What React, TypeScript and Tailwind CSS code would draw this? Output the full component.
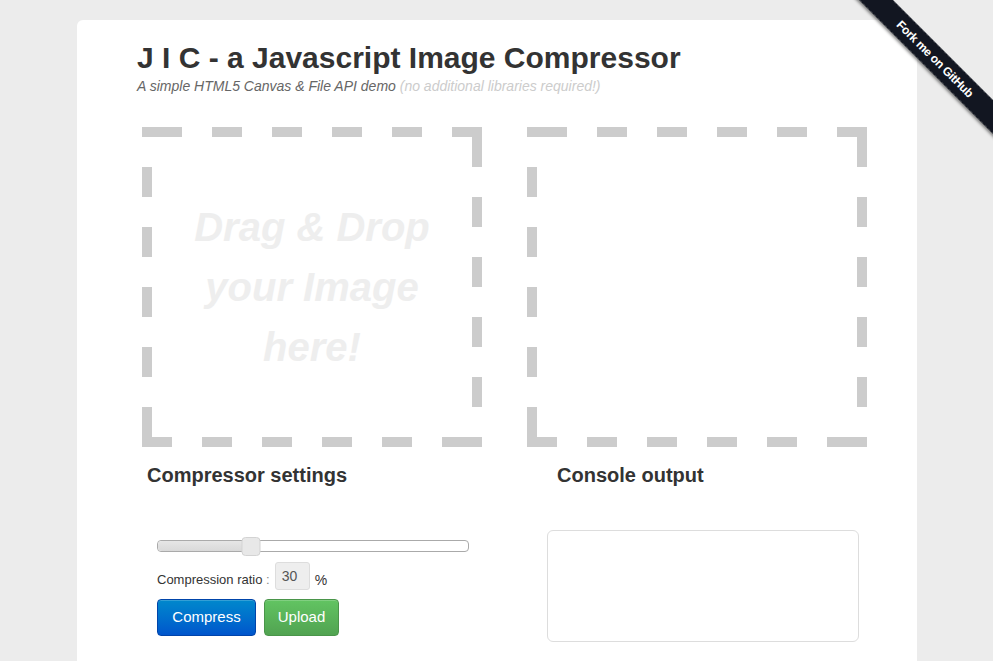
import React from "react";

const SANS = "font-['Liberation_Sans','Helvetica_Neue',Helvetica,Arial,sans-serif]";

// dashed 10px frame, drawn per side so corners stay solid like the original
function DashedFrame() {
  return (
    <svg className="pointer-events-none absolute inset-0" width="340" height="320" viewBox="0 0 340 320">
      <g stroke="#ccc" strokeWidth="10" strokeDasharray="30 30" strokeDashoffset="50" fill="none">
        <line x1="0" y1="5" x2="340" y2="5" />
        <line x1="335" y1="0" x2="335" y2="320" />
        <line x1="340" y1="315" x2="0" y2="315" />
        <line x1="5" y1="320" x2="5" y2="0" />
      </g>
      <g fill="#ccc">
        <rect x="0" y="0" width="10" height="10" />
        <rect x="330" y="0" width="10" height="10" />
        <rect x="0" y="310" width="10" height="10" />
        <rect x="330" y="310" width="10" height="10" />
      </g>
    </svg>
  );
}

function Ribbon() {
  return (
    <div className="pointer-events-none absolute right-0 top-0 h-[149px] w-[149px] overflow-hidden">
      <div className="absolute left-[-19px] top-[47px] flex h-[24px] w-[220px] rotate-45 items-center justify-center border-y border-dashed border-white/15 bg-[#121621] shadow-[0_2px_3px_rgba(0,0,0,0.45)]">
        <span className={`${SANS} text-[12px] font-bold tracking-[-0.3px] text-white`}>
          Fork me on GitHub
        </span>
      </div>
    </div>
  );
}

function Slider({ value }: { value: number }) {
  const pct = value / 100;
  return (
    <div className="relative h-[12px] w-[312px] rounded-[4px] border border-[#aaa] bg-white">
      <div
        className="absolute inset-y-0 left-0 rounded-l-[4px] bg-gradient-to-b from-[#e6e6e6] to-[#d9d9d9]"
        style={{ width: `${pct * 100}%` }}
      />
      <div
        className="absolute top-[-4px] h-[19px] w-[19px] -translate-x-1/2 rounded-[4px] border border-[#d3d3d3] bg-[#e8e8e8]"
        style={{ left: `${pct * 100}%` }}
      />
    </div>
  );
}

export default function App() {
  return (
    <div className={`${SANS} relative h-screen overflow-hidden bg-[#ececec] pt-5`}>
      <div className="ml-[77px] min-h-[700px] w-[840px] rounded-t-[6px] bg-white px-[60px] pt-[20px]">
        {/* header */}
        <h1 className="text-[30px] font-bold leading-[36px] text-[#333]">
          J I C - a Javascript Image Compressor
        </h1>
        <p className="mt-[2px] text-[14px] italic leading-[17px] text-[#666]">
          A simple HTML5 Canvas &amp; File API demo{" "}
          <span className="text-[#ccc]">(no additional libraries required!)</span>
        </p>

        {/* drop zones */}
        <div className="ml-[5px] mt-[32px] flex gap-[45px]">
          <div className="relative flex h-[320px] w-[340px] shrink-0 items-center justify-center">
            <DashedFrame />
            <p className="text-center text-[40px] font-bold italic leading-[60px] text-[#eee]">
              Drag &amp; Drop
              <br />
              your Image
              <br />
              here!
            </p>
          </div>
          <div className="relative h-[320px] w-[340px] shrink-0">
            <DashedFrame />
          </div>
        </div>

        {/* settings + console */}
        <div className="ml-[10px] mt-[15px] flex">
          <div className="w-[400px] shrink-0">
            <h3 className="text-[20px] font-bold leading-[26px] text-[#333]">
              Compressor settings
            </h3>
            <div className="ml-[10px] mt-[52px]">
              <Slider value={30} />
              <div className="mt-[10px] flex items-start text-[13px] leading-[16px] text-[#333]">
                <span className="pt-[10px]">
                  Compression ratio <span className="text-[#888]">:</span>
                </span>
                <span className="ml-[5px] flex h-[28px] w-[35px] items-start rounded-[3px] border border-[#ddd] bg-[#eee] px-[6px] pt-[5px] text-[14px] leading-[16px] text-[#555]">
                  30
                </span>
                <span className="ml-[5px] pt-[10px] text-[14px]">%</span>
              </div>
              <div className="mt-[9px] flex gap-[8px]">
                <button className="h-[37px] w-[99px] rounded-[4px] border border-[#0044aa] bg-gradient-to-b from-[#0088cc] to-[#0055cc] text-[15px] text-white shadow-[inset_0_1px_0_rgba(255,255,255,0.2)]">
                  Compress
                </button>
                <button className="h-[37px] w-[75px] rounded-[4px] border border-[#4a954a] bg-gradient-to-b from-[#62c462] to-[#51a351] text-[15px] text-white shadow-[inset_0_1px_0_rgba(255,255,255,0.2)]">
                  Upload
                </button>
              </div>
            </div>
          </div>
          <div className="shrink-0">
            <h3 className="ml-[10px] text-[20px] font-bold leading-[26px] text-[#333]">
              Console output
            </h3>
            <textarea
              readOnly
              className="mt-[42px] block h-[112px] w-[312px] resize-none rounded-[6px] border border-[#ddd] bg-white outline-none"
            />
          </div>
        </div>
      </div>
      <Ribbon />
    </div>
  );
}
